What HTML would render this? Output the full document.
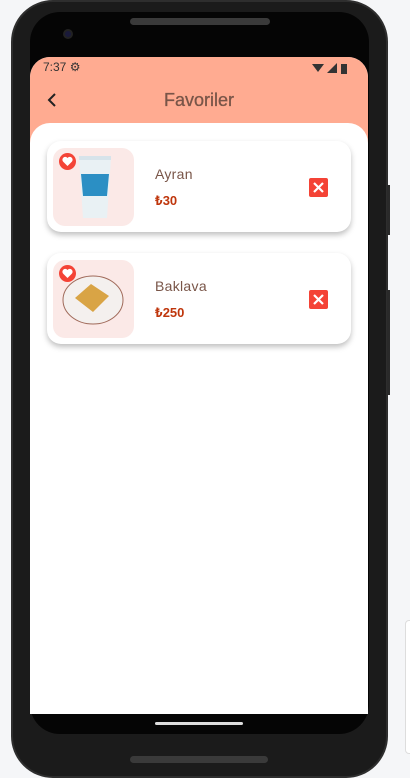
<!DOCTYPE html>
<html><head><meta charset="utf-8"><style>
*{margin:0;padding:0;box-sizing:border-box}
body{width:410px;height:778px;background:#f5f6f8;position:relative;overflow:hidden;font-family:"Liberation Sans",Roboto,sans-serif}
.phone{position:absolute;left:11px;top:0;width:377px;height:778px;background:#1b1b1b;border-radius:42px;border:2px solid #2e2e2e}
.inner{position:absolute;left:30px;top:12px;width:339px;height:722px;background:#050505;border-radius:30px}
.speaker{position:absolute;left:130px;top:18px;width:140px;height:7px;border-radius:4px;background:#3a3a3a}
.speaker2{position:absolute;left:130px;top:756px;width:138px;height:7px;border-radius:4px;background:#3a3a3a}
.cam{position:absolute;left:63px;top:29px;width:10px;height:10px;border-radius:50%;background:#1a1a3a;border:2px solid #222}
.screen{position:absolute;left:30px;top:57px;width:338px;height:657px;background:#fff;border-radius:20px 20px 0 0;overflow:hidden}
.hdr{position:absolute;left:0;top:0;width:338px;height:90px;background:#ffab91}
.sheet{position:absolute;left:0;top:66px;width:338px;height:600px;background:#fff;border-radius:20px 20px 0 0}
.status{position:absolute;left:13px;top:3px;font-size:12px;color:#333}
.title{position:absolute;left:0;width:338px;top:33px;text-align:center;font-size:18px;color:#795548;-webkit-text-stroke:0.3px #795548}
.card{position:absolute;left:17px;width:304px;height:91px;background:#fff;border-radius:14px;box-shadow:0 3px 6px rgba(0,0,0,.25)}
.img{position:absolute;left:6px;top:7px;width:81px;height:78px;background:#fbe9e7;border-radius:12px}
.heart{position:absolute;left:12px;top:12px;width:17px;height:17px;border-radius:50%;background:#f44336}
.name{position:absolute;left:108px;top:25px;font-size:14px;color:#795548;letter-spacing:.3px}
.price{position:absolute;left:108px;top:52px;font-size:13px;font-weight:bold;color:#bf360c}
.x{position:absolute;left:262px;top:37px;width:19px;height:19px;background:#f44336;border-radius:2px}
.home{position:absolute;left:155px;top:722px;width:88px;height:3px;background:#ddd;border-radius:2px}
.btn{position:absolute;left:387px;width:3px;background:#2a2a2a}
</style></head><body>
<div class="phone"></div>
<div class="btn" style="top:185px;height:50px"></div>
<div class="btn" style="top:290px;height:105px"></div>
<div class="inner"></div>
<div class="speaker"></div><div class="speaker2"></div><div class="cam"></div>
<div style="position:absolute;left:405px;top:620px;width:10px;height:134px;border:1px solid #ddd;border-radius:4px;background:#fff"></div>
<div class="screen">
<div class="hdr"></div>
<div class="status">7:37 ⚙</div>
<svg style="position:absolute;right:20px;top:5px" width="36" height="12"><path d="M0 2h12l-6 8z" fill="#333"/><path d="M15 11L25 1v10z" fill="#333"/><rect x="29" y="2" width="6" height="10" fill="#333"/></svg>
<svg style="position:absolute;left:16px;top:35px" width="14" height="16"><path d="M9 2L3 8l6 6" stroke="#222" stroke-width="2" fill="none"/></svg>
<div class="title">Favoriler</div>
<div class="sheet"></div>
<div class="card" style="top:84px">
 <div class="img"><svg style="position:absolute;left:24px;top:6px" width="36" height="66"><path d="M2 4h32l-4 60H6z" fill="#e9f1f4"/><path d="M4 20h28l-2 22H6z" fill="#2b8fc4"/><rect x="2" y="2" width="32" height="4" fill="#d7e3ea"/></svg></div>
 <div class="heart"><svg width="17" height="17"><path d="M8.5 13L4 8.5A2.5 2.5 0 0 1 8.5 5 2.5 2.5 0 0 1 13 8.5z" fill="#fff"/></svg></div>
 <div class="name">Ayran</div><div class="price">₺30</div>
 <div class="x"><svg width="19" height="19"><path d="M5 5l9 9M14 5l-9 9" stroke="#fff" stroke-width="2.2"/></svg></div>
</div>
<div class="card" style="top:196px">
 <div class="img"><svg style="position:absolute;left:8px;top:14px" width="64" height="52"><ellipse cx="32" cy="26" rx="30" ry="24" fill="#f4f0ee" stroke="#a06a5a"/><path d="M14 24l16-14 18 12-16 16z" fill="#d9a445"/></svg></div>
 <div class="heart"><svg width="17" height="17"><path d="M8.5 13L4 8.5A2.5 2.5 0 0 1 8.5 5 2.5 2.5 0 0 1 13 8.5z" fill="#fff"/></svg></div>
 <div class="name">Baklava</div><div class="price">₺250</div>
 <div class="x"><svg width="19" height="19"><path d="M5 5l9 9M14 5l-9 9" stroke="#fff" stroke-width="2.2"/></svg></div>
</div>
</div>
<div class="home"></div>
</body></html>
